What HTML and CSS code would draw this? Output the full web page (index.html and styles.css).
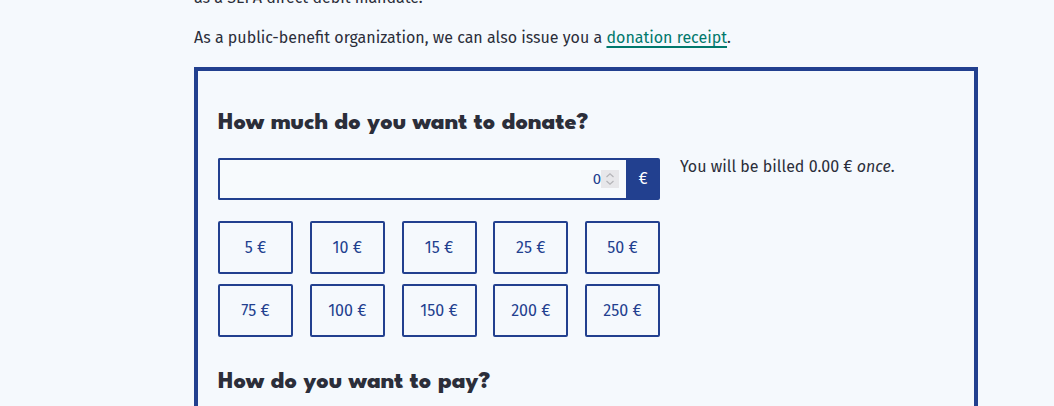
FILE: index.html
```html
<!DOCTYPE html>
<html lang="en">
<head>
<meta charset="utf-8">
<title>Donate</title>
<link rel="stylesheet" href="styles.css">
</head>
<body>
<main class="page">
  <p class="intro">as a SEPA direct debit mandate.</p>
  <p class="intro">As a public-benefit organization, we can also issue you a <a href="#" class="link">donation receipt</a>.</p>
  <form class="box">
    <h2 class="heading">How much do you want to donate?</h2>
    <div class="amount-row">
      <div class="amount-col">
        <div class="input-group">
          <div class="amount-input">
            <span class="value">0</span>
            <span class="spinner">
              <svg width="10" height="14" viewBox="0 0 10 14" fill="none" stroke="#b4b4b8" stroke-width="1.2"><path d="M1.5 5 L5 1.8 L8.5 5"/><path d="M1.5 9 L5 12.2 L8.5 9"/></svg>
            </span>
          </div>
          <span class="addon">€</span>
        </div>
        <div class="presets">
          <button type="button" class="preset">5 €</button>
          <button type="button" class="preset">10 €</button>
          <button type="button" class="preset">15 €</button>
          <button type="button" class="preset">25 €</button>
          <button type="button" class="preset">50 €</button>
          <button type="button" class="preset">75 €</button>
          <button type="button" class="preset">100 €</button>
          <button type="button" class="preset">150 €</button>
          <button type="button" class="preset">200 €</button>
          <button type="button" class="preset">250 €</button>
        </div>
      </div>
      <p class="billed">You will be billed 0.00 € <em>once</em>.</p>
    </div>
    <h2 class="heading heading-pay">How do you want to pay?</h2>
  </form>
</main>
</body>
</html>
```
FILE: styles.css
```css
html, body {
  margin: 0;
  padding: 0;
  background: #f5f9fd;
}
body {
  font-family: "Fira Sans", "Noto Sans", "Open Sans", sans-serif;
  color: #2b2e3a;
  font-size: 16px;
  line-height: 24px;
  overflow: hidden;
}
.page {
  width: 784px;
  margin-left: 194px;
  margin-top: -14px;
}
.intro {
  margin: 0 0 16px 0;
}
.intro + .intro {
  margin-bottom: 17px;
}
.link {
  color: #00786c;
  text-decoration: underline;
  text-underline-offset: 3px;
  text-decoration-thickness: 2px;
}
.box {
  box-sizing: border-box;
  width: 784px;
  border: 4px solid #22408f;
  padding: 38px 20px 0 20px;
  height: 400px;
}
.heading {
  margin: 0;
  font-family: "League Spartan", "Spartan", "Lato", "DejaVu Sans", sans-serif;
  font-weight: 800;
  font-size: 24px;
  line-height: 29px;
  color: #2b2e3a;
}
.amount-row {
  display: flex;
  gap: 20px;
  margin-top: 20px;
}
.amount-col {
  width: 442px;
  flex: none;
}
.input-group {
  display: flex;
  height: 42px;
}
.amount-input {
  flex: 1;
  box-sizing: border-box;
  border: 2px solid #22408f;
  border-right: none;
  border-radius: 2px 0 0 2px;
  background: #f7fafd;
  display: flex;
  align-items: center;
  justify-content: flex-end;
  padding-right: 7px;
  color: #22408f;
}
.value {
  font-size: 15px;
}
.spinner {
  width: 18px;
  height: 18px;
  background: #e7e7ea;
  display: flex;
  align-items: center;
  justify-content: center;
}
.addon {
  width: 34px;
  background: #22408f;
  color: #ffffff;
  border-radius: 0 2px 2px 0;
  display: flex;
  align-items: center;
  justify-content: center;
  font-size: 16px;
}
.presets {
  display: grid;
  grid-template-columns: repeat(5, 75px);
  justify-content: space-between;
  row-gap: 10px;
  margin-top: 21px;
}
.preset {
  height: 53px;
  box-sizing: border-box;
  border: 2px solid #22408f;
  border-radius: 2px;
  background: #f5f9fd;
  color: #22408f;
  font-family: "Fira Sans", "Noto Sans", "Open Sans", sans-serif;
  font-size: 16px;
  padding: 0;
}
.billed {
  margin: 0;
  line-height: 18px;
}
.heading-pay {
  margin-top: 31px;
}
```
